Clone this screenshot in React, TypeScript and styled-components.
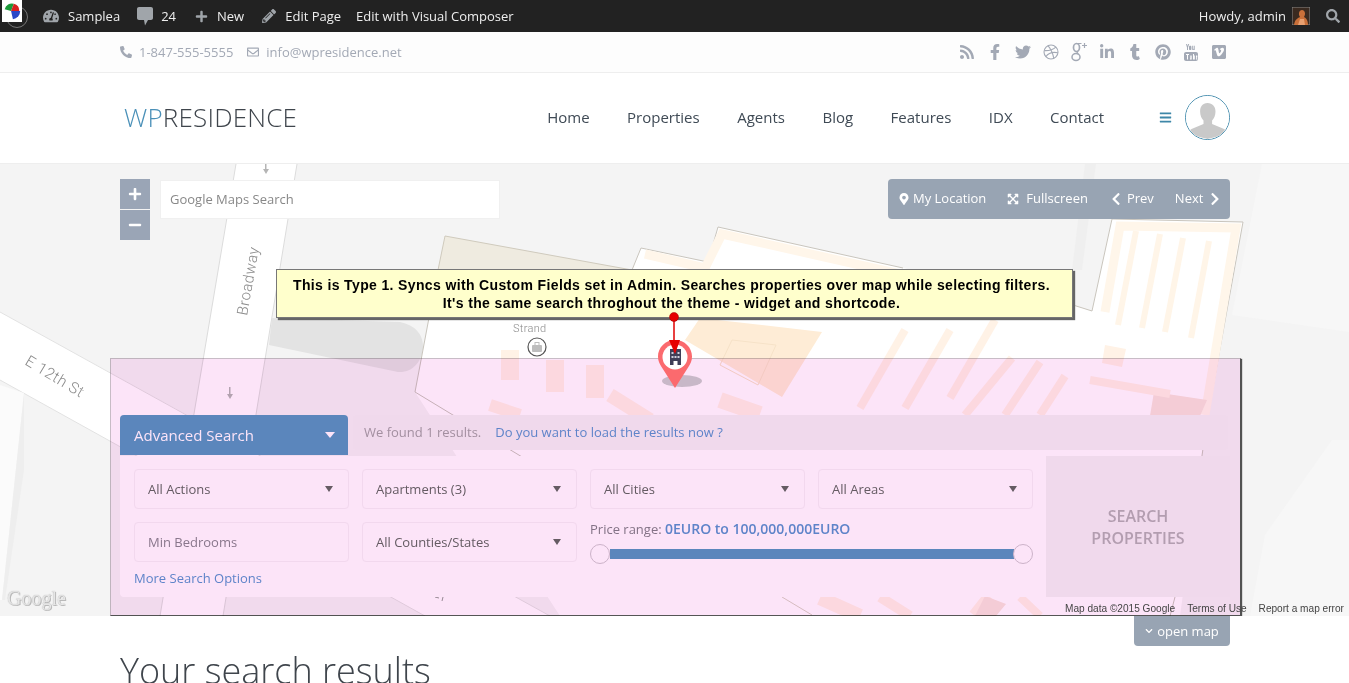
import React from "react";
import styled, { createGlobalStyle } from "styled-components";
import {
  FaBars,
  FaChevronDown,
  FaChevronLeft,
  FaChevronRight,
  FaExpandArrowsAlt,
  FaFacebookF,
  FaLinkedinIn,
  FaMapMarkerAlt,
  FaMinus,
  FaPencilAlt,
  FaPhoneAlt,
  FaPinterest,
  FaPlus,
  FaRegEnvelope,
  FaRss,
  FaSearch,
  FaTachometerAlt,
  FaTumblr,
  FaTwitter,
  FaVimeoSquare,
} from "react-icons/fa";

const GlobalStyle = createGlobalStyle`
  html, body {
    margin: 0;
    height: 100%;
    overflow: hidden;
    background: #fff;
    font-family: "Open Sans", "Liberation Sans", sans-serif;
  }
  * { box-sizing: border-box; }
`;

const AdminBar = styled.div`
  position: relative;
  z-index: 0;
  height: 32px;
  background: #222;
  color: #eee;
  font-size: 13px;
  display: flex;
  align-items: center;
  padding: 0 9px 0 0;
`;

const AdminItem = styled.span<{ $ml: number }>`
  margin-left: ${({ $ml }) => $ml}px;
  display: flex;
  align-items: center;
  white-space: nowrap;
`;

const AdminIcon = styled.span<{ $ml: number }>`
  margin-left: ${({ $ml }) => $ml}px;
  display: flex;
  align-items: center;
  color: #a0a5aa;
  font-size: 14px;
`;

const LogoBadge = styled.div`
  position: relative;
  width: 20px;
  height: 22px;
  margin: -10px 0 0 2px;
  background: #fff;
  display: flex;

  &::before {
    content: "";
    position: absolute;
    left: 4px;
    top: 6px;
    width: 20px;
    height: 20px;
    border-radius: 50%;
    border: 1px solid #777;
    z-index: -1;
  }
`;

const AdminSpacer = styled.div`
  flex: 1;
`;

const TopBar = styled.div`
  height: 41px;
  background: #fdfdfd;
  border-bottom: 1px solid #eee;
  display: flex;
  align-items: center;
  padding: 0 116px 0 120px;
  color: #a3a9b5;
  font-size: 13px;
`;

const Contact = styled.span<{ $ml: number }>`
  margin-left: ${({ $ml }) => $ml}px;
  display: flex;
  align-items: center;
  gap: 7px;
  svg {
    font-size: 12px;
  }
`;

const Socials = styled.div`
  margin-left: auto;
  display: flex;
  color: #a3a9b5;
`;

const Social = styled.span`
  width: 28px;
  height: 20px;
  display: flex;
  align-items: center;
  justify-content: center;
  font-size: 16px;
`;

const Header = styled.header`
  height: 91px;
  background: #fff;
  border-bottom: 1px solid #eee;
  display: flex;
  align-items: center;
  padding: 0 119px 2px 124px;
`;

const Logo = styled.div`
  font-size: 26px;
  font-weight: 300;
  color: #3f454c;
  letter-spacing: 0.2px;
  span {
    color: #4a90b8;
  }
`;

const Nav = styled.nav`
  margin-left: auto;
  display: flex;
  align-items: center;
  gap: 37.5px;
  font-size: 15px;
  color: #3f4a55;
`;

const MenuToggle = styled.span`
  margin-left: 55px;
  display: flex;
  color: #3e87a8;
  font-size: 13px;
`;

const UserCircle = styled.div`
  margin-left: 13px;
  width: 45px;
  height: 45px;
  border-radius: 50%;
  border: 1px solid #4a90b0;
  overflow: hidden;
  display: flex;
`;

const MapArea = styled.section`
  position: relative;
  height: 452px;
  background: #f4f4f4;
  overflow: hidden;
`;

const MapCanvas = styled.svg`
  position: absolute;
  inset: 0;
  width: 1349px;
  height: 452px;
`;

const ZoomControls = styled.div`
  position: absolute;
  left: 120px;
  top: 15px;
  display: flex;
  flex-direction: column;
  gap: 1px;
`;

const ZoomButton = styled.div`
  width: 30px;
  height: 30px;
  background: #9aa5b6;
  color: #fff;
  font-size: 14px;
  display: flex;
  align-items: center;
  justify-content: center;
`;

const MapSearch = styled.div`
  position: absolute;
  left: 160px;
  top: 16px;
  width: 340px;
  height: 39px;
  background: #fff;
  border: 1px solid #f0f0f0;
  color: #888;
  font-size: 13px;
  display: flex;
  align-items: center;
  padding: 0 0 2px 9px;
`;

const MapActions = styled.div`
  position: absolute;
  left: 888px;
  top: 15px;
  width: 342px;
  height: 40px;
  background: #98a4b3;
  border-radius: 4px;
  color: #fff;
  font-size: 13px;
  display: flex;
  align-items: center;
  padding: 0 0 2px 10px;
  gap: 21px;
`;

const MapAction = styled.span<{ $gap: number; $icon: number }>`
  display: flex;
  align-items: center;
  gap: ${({ $gap }) => $gap}px;
  white-space: nowrap;
  svg {
    font-size: ${({ $icon }) => $icon}px;
    margin-top: 2px;
  }
`;

const Callout = styled.div`
  position: absolute;
  left: 276px;
  top: 105px;
  width: 797px;
  height: 49px;
  background: #ffffcc;
  border: 1px solid #777;
  box-shadow: 2px 2px 1px #666;
  color: #000;
  font-family: "Liberation Sans", Arial, sans-serif;
  font-size: 14px;
  font-weight: 700;
  line-height: 18px;
  letter-spacing: 0.36px;
  text-align: center;
  padding: 6px 6px 0 0;
`;

const SearchBlock = styled.div`
  position: absolute;
  left: 120px;
  top: 251px;
  width: 1110px;
`;

const SearchHead = styled.div`
  display: flex;
  gap: 5px;
  height: 41px;
  align-items: flex-start;
`;

const SearchTab = styled.div`
  width: 228px;
  height: 40px;
  background: #5c96c2;
  border-radius: 4px 4px 0 0;
  color: #fff;
  font-size: 15px;
  display: flex;
  align-items: center;
  justify-content: space-between;
  padding: 0 13px 0 14px;
`;

const TabCaret = styled.span`
  width: 0;
  height: 0;
  border-left: 5px solid transparent;
  border-right: 5px solid transparent;
  border-top: 6px solid #fff;
`;

const ResultsBar = styled.div`
  width: 875px;
  height: 35px;
  background: #f3f3f3;
  border-radius: 4px;
  color: #a5a0a5;
  font-size: 13px;
  display: flex;
  align-items: center;
  padding: 0 0 2px 11px;
  gap: 14px;
`;

const ResultsLink = styled.span`
  color: #5f93cf;
`;

const SearchBody = styled.div`
  display: flex;
  height: 141px;
`;

const SearchForm = styled.div`
  width: 926px;
  background: #fff;
  border-radius: 0 0 0 4px;
  padding: 13px 14px;
  display: grid;
  grid-template-columns: repeat(4, 215px);
  grid-template-rows: 40px 40px auto;
  gap: 13px;
`;

const Field = styled.div`
  border: 1px solid #f5f2f5;
  border-radius: 4px;
  background: #fff;
  color: #666;
  font-size: 13px;
  display: flex;
  align-items: center;
  justify-content: space-between;
  padding: 0 15px 0 13px;
`;

const Placeholder = styled(Field)`
  color: #8b8590;
`;

const FieldCaret = styled.span`
  width: 0;
  height: 0;
  border-left: 4px solid transparent;
  border-right: 4px solid transparent;
  border-top: 6px solid #666;
`;

const PriceCell = styled.div`
  grid-column: 3 / span 2;
  display: flex;
  flex-direction: column;
`;

const PriceLabel = styled.div`
  color: #85808a;
  font-size: 13px;
  line-height: 14px;
  b {
    color: #5f93cf;
    font-size: 14px;
    font-weight: 600;
  }
`;

const Slider = styled.div`
  position: relative;
  height: 20px;
  margin-top: 8px;
  padding: 5px 19px 0 20px;
`;

const SliderTrack = styled.div`
  height: 10px;
  background: #5c96c2;
`;

const SliderHandle = styled.span<{ $side: "left" | "right" }>`
  position: absolute;
  top: 0;
  ${({ $side }) => $side}: 0;
  width: 20px;
  height: 20px;
  border-radius: 50%;
  background: #fff;
  border: 1px solid #cfc8cf;
`;

const MoreOptions = styled.div`
  grid-column: 1 / span 2;
  color: #5f93cf;
  font-size: 13px;
  margin-top: -6px;
`;

const SearchSubmit = styled.div`
  width: 184px;
  background: #f3f3f3;
  color: #b5b0b5;
  font-size: 16px;
  font-weight: 600;
  line-height: 22px;
  text-align: center;
  display: flex;
  align-items: center;
  justify-content: center;
  padding: 0 30px;
`;

const Highlight = styled.div`
  position: absolute;
  left: 110px;
  top: 194px;
  width: 1131px;
  height: 258px;
  background: #fce4f8;
  mix-blend-mode: multiply;
  border: 1px solid #c8bcc6;
  border-right-color: #555;
  border-bottom-color: #555;
  box-shadow: 1px 1px 1px #555;
`;

const MarkerLayer = styled.svg`
  position: absolute;
  left: 650px;
  top: 146px;
  width: 60px;
  height: 90px;
`;

const GoogleMark = styled.div`
  position: absolute;
  left: 7px;
  top: 423px;
  color: #e6e6e6;
  font-family: "Liberation Serif", serif;
  font-size: 20px;
  line-height: 22px;
  text-shadow: 0 0 1px #aaa, 1px 1px 0 #bbb;
`;

const Attribution = styled.div`
  position: absolute;
  left: 1065px;
  bottom: 1px;
  display: flex;
  gap: 12px;
  color: #444;
  font-family: "Liberation Sans", Arial, sans-serif;
  font-size: 10.1px;
  line-height: 12px;
  white-space: nowrap;
`;

const Content = styled.main`
  padding: 0 119px 0 120px;
  display: flex;
  flex-direction: column;
`;

const OpenMap = styled.div`
  align-self: flex-end;
  width: 96px;
  height: 30px;
  background: #98a4b3;
  border-radius: 0 0 4px 4px;
  color: #fff;
  font-size: 13px;
  display: flex;
  align-items: center;
  justify-content: center;
  gap: 4px;
  svg {
    font-size: 8px;
  }
`;

const PageTitle = styled.h1`
  margin: -1px 0 0;
  font-size: 36px;
  line-height: 52px;
  font-weight: 300;
  color: #3f454c;
`;

const cities = ["All Actions", "Apartments (3)", "All Cities", "All Areas"];
const navItems = ["Home", "Properties", "Agents", "Blog", "Features", "IDX", "Contact"];

const YoutubeIcon = () => (
  <svg width="14" height="17" viewBox="0 0 14 17" fill="currentColor">
    <path d="M2 0h1l.6 2L4.2 0h1L4 3.4V6H3V3.4zM6.2 1.8c.8 0 1.2.4 1.2 1.1v2c0 .7-.4 1.1-1.2 1.1S5 5.6 5 4.9v-2c0-.7.4-1.1 1.2-1.1zM8.2 1.8h.9v3.4c.3-.3.5-.4.7-.4V1.8h.9V6h-.9v-.4c-.4.4-.8.5-1.1.5-.4 0-.5-.3-.5-.7z" />
    <path
      fillRule="evenodd"
      d="M2 8h10c1.1 0 2 .9 2 2v5c0 1.1-.9 2-2 2H2c-1.1 0-2-.9-2-2v-5c0-1.1.9-2 2-2zM2 10v1h1v4.5h1V11h1v-1zM6 11.500v4h1.700v-4H7v3h-.3v-3zM9 10v5.500h1.800v-4H10V10zM12 11.500v4h1.300v-1h-.6v-1h.6v-2z"
    />
  </svg>
);

const DribbbleIcon = () => (
  <svg width="16" height="16" viewBox="0 0 16 16" fill="none" stroke="currentColor" strokeWidth="1.100">
    <circle cx="8" cy="8" r="7" />
    <path d="M5 1.700c2.500 3 4.800 7.500 5.800 12.700" />
    <path d="M1.200 6.600c4.500.2 8.700-.6 11.600-3.500" />
    <path d="M2.800 12.700c2.500-3.500 6-5.200 12-4" />
  </svg>
);

const GooglePlusIcon = () => (
  <svg width="17" height="20" viewBox="0 0 17 20" fill="none" stroke="currentColor">
    <ellipse cx="5.500" cy="5.500" rx="3" ry="4" strokeWidth="1.700" />
    <ellipse cx="5" cy="15" rx="4" ry="3.500" strokeWidth="1.500" />
    <path d="M7 9.500c-1.500 1-1 1.800.5 2.800" strokeWidth="1.300" />
    <path d="M5.500 1.500h5M13.500 1v5M11 3.500h5" strokeWidth="1.200" />
  </svg>
);

const CommentIcon = () => (
  <svg width="16" height="19" viewBox="0 0 16 19" fill="currentColor">
    <path d="M2 0h12c1.100 0 2 .9 2 2v9c0 1.100-.9 2-2 2h-3l-3 5.500L7 13H2c-1.100 0-2-.9-2-2V2C0 .9.900 0 2 0z" />
  </svg>
);

const PieLogo = () => (
  <svg width="20" height="22" viewBox="0 0 22 22">
    <path d="M10 11 L3 9 A8 8 0 0 1 13 3 Z" fill="#1c9a3a" />
    <path d="M10 11 L13 3 A8 8 0 0 1 19 11 Z" fill="#d8201f" />
    <path d="M10 11 L20 11 A9 9 0 0 1 12 20 Z" fill="#2a48c8" />
  </svg>
);

const UserThumb = () => (
  <svg width="18" height="18" viewBox="0 0 18 18">
    <rect width="18" height="18" fill="#3a2a20" stroke="#888" />
    <path d="M2 18 C3 12 6 11 8 10 C6 7 7 3 10 3 C13 3 14 7 12 10 C14 11 16 13 16 18 Z" fill="#c9703a" />
    <path d="M6 18 L8 12 L12 12 L13 18 Z" fill="#e8a070" />
  </svg>
);

const UserSilhouette = () => (
  <svg width="43" height="43" viewBox="0 0 43 43">
    <rect width="43" height="43" fill="#fff" />
    <path
      d="M21.500 7c5 0 8 3.600 8 8.500 0 3.800-1.400 7-3.400 9v3.500l12 5c2 1 3 3 3.500 5L21.500 43 2 38c.5-2 1.500-4 3.500-5l12-5v-3.500c-2-2-3.400-5.200-3.400-9C14.100 10.600 16.500 7 21.500 7z"
      fill="#c9c9c9"
    />
  </svg>
);

const MapDrawing = () => (
  <MapCanvas viewBox="0 164 1349 452">
    <polygon points="1262,164 1349,164 1349,332 1232,315" fill="#f7f7f7" />
    <polygon points="1085,164 1096,164 1082,270 1072,270" fill="#efefef" />
    <polygon points="1332,440 1349,440 1349,616 1250,616 1265,535" fill="#f7f7f7" />

    <polygon points="236,164 297,164 223,616 160,616" fill="#fff" />
    <line x1="236" y1="164" x2="160" y2="616" stroke="#dcdcdc" />
    <line x1="297" y1="164" x2="223" y2="616" stroke="#dcdcdc" />

    <polygon points="0,312 187,415 550,616 425,616 0,380" fill="#fff" />
    <line x1="0" y1="312" x2="550" y2="616" stroke="#e2e2e2" />
    <line x1="0" y1="380" x2="425" y2="616" stroke="#e2e2e2" />
    <polygon points="0,385 24,393 2,600 0,600" fill="#fbfbfb" />
    <polygon points="24,393 24,470 5,600 2,600" fill="#eeeeee" />

    <path
      d="M272 318 L400 322 C415 325 424 335 423 348 C422 362 412 373 398 372 L269 345 Z"
      fill="#e3e3e3"
    />

    <polygon points="445,236 632,270 438,270" fill="#efebe0" stroke="#cfcabd" />
    <polygon
      points="438,270 632,270 641,248 708,262 718,227 903,268 1073,305 1092,311 1112,219 1243,222 1207,420 1180,616 560,616 415,392"
      fill="#fff"
    />
    <polyline points="438,270 415,392 560,480" fill="none" stroke="#c9c5bd" />
    <polyline points="632,270 641,248 708,262 718,227 903,268" fill="none" stroke="#c9c5bd" />
    <polyline
      points="1073,305 1092,311 1112,219 1243,222 1207,420 1200,470"
      fill="none"
      stroke="#c9c5bd"
    />
    <polyline points="645,254 705,268 722,234 900,274" fill="none" stroke="#fff6ea" strokeWidth="9" />
    <polyline points="1105,312 1120,226 1236,228 1205,415" fill="none" stroke="#fff6ea" strokeWidth="9" />
    <g stroke="#fff5e8" strokeWidth="6">
      <line x1="1136" y1="231" x2="1118" y2="325" />
      <line x1="1160" y1="234" x2="1142" y2="328" />
      <line x1="1183" y1="238" x2="1165" y2="332" />
      <line x1="1209" y1="241" x2="1191" y2="338" />
    </g>
    <polygon points="700,318 822,332 782,397 685,340" fill="#feecd6" />
    <polygon points="732,340 776,345 758,385 720,365" fill="none" stroke="#f6e2c8" />
    <polygon points="1105,345 1126,349 1122,367 1102,363" fill="#fff2e6" />
    <polygon points="1154,392 1207,400 1200,416 1150,416" fill="#f7e4dc" />
    <g stroke="#fff2e6" strokeWidth="8">
      <line x1="1012" y1="358" x2="965" y2="415" />
      <line x1="1040" y1="362" x2="1005" y2="415" />
      <line x1="1065" y1="376" x2="1040" y2="415" />
      <line x1="905" y1="330" x2="860" y2="408" />
      <line x1="950" y1="330" x2="905" y2="408" />
      <line x1="995" y1="320" x2="950" y2="398" />
      <line x1="1090" y1="380" x2="1170" y2="394" />
      <line x1="510" y1="350" x2="510" y2="380" strokeWidth="18" />
      <line x1="555" y1="360" x2="555" y2="392" strokeWidth="18" />
      <line x1="595" y1="365" x2="595" y2="398" strokeWidth="18" />
      <line x1="610" y1="395" x2="650" y2="420" strokeWidth="14" />
      <line x1="720" y1="400" x2="760" y2="414" strokeWidth="16" />
      <line x1="490" y1="405" x2="520" y2="415" strokeWidth="12" />
      <line x1="820" y1="598" x2="860" y2="616" strokeWidth="14" />
      <line x1="880" y1="597" x2="910" y2="616" strokeWidth="10" />
      <line x1="990" y1="597" x2="975" y2="616" strokeWidth="14" />
      <line x1="1020" y1="597" x2="1040" y2="616" strokeWidth="8" />
    </g>
    <polygon points="985,596 1006,604 996,616 975,616" fill="#f7e4dc" />
    <line x1="782" y1="597" x2="812" y2="615" stroke="#d9d2c6" />
    <line x1="1175" y1="597" x2="1170" y2="616" stroke="#c9c5bd" />
    <path d="M435 597l4 1M443 597l-1 4" stroke="#999" fill="none" />

    <g fill="#b5b5b5" transform="translate(262 164)">
      <rect x="3" y="0" width="1.500" height="6" />
      <path d="M1 5h6l-3 5z" />
    </g>
    <g fill="#b5b5b5" transform="translate(226 387)">
      <rect x="3" y="0" width="1.500" height="8" />
      <path d="M1 7h6l-3 5z" />
    </g>

    <g fontFamily="Roboto, 'Liberation Sans', sans-serif" fontWeight="300" fill="#8a8a8a">
      <text x="0" y="0" fontSize="15" transform="translate(247 316) rotate(-80)" letterSpacing="0.5">
        Broadway
      </text>
      <text x="0" y="0" fontSize="15.500" transform="translate(24 364) rotate(31)" letterSpacing="0.5">
        E 12th St
      </text>
      <text x="513" y="332" fontSize="11" letterSpacing="0.3">
        Strand
      </text>
    </g>
    <circle cx="537" cy="347" r="9" fill="#fff" stroke="#555" strokeWidth="1.200" />
    <rect x="532" y="345" width="10" height="7" rx="1" fill="#bdbdbd" />
    <rect x="535" y="342.500" width="4" height="3" fill="none" stroke="#bdbdbd" />
  </MapCanvas>
);

const MarkerDrawing = () => (
  <MarkerLayer viewBox="650 310 60 90">
    <ellipse cx="682" cy="381" rx="20" ry="6" fill="#c8b8c8" />
    <path
      d="M675 340c-9.600 0-17 7.500-17 16.600 0 4 1.400 7.400 3.600 10.400L675 388l13.400-21c2.200-3 3.600-6.400 3.600-10.400 0-9.100-7.400-16.600-17-16.600z"
      fill="#fb6a6e"
    />
    <circle cx="675" cy="357" r="12.500" fill="#fff" />
    <path d="M670 349h11v16h-3.500v-4h-4v4H670z" fill="#3f3f58" />
    <g fill="#cfcfdc">
      <rect x="671.500" y="352" width="2" height="2" />
      <rect x="677.500" y="352" width="2" height="2" />
      <rect x="671.500" y="356" width="2" height="2" />
      <rect x="674.500" y="356" width="2" height="2" />
      <rect x="677.500" y="356" width="2" height="2" />
    </g>
    <line x1="674" y1="317" x2="674" y2="345" stroke="#e00000" strokeWidth="1.500" />
    <circle cx="674" cy="317" r="4.500" fill="#e60000" stroke="#900" strokeWidth="0.500" />
    <polygon points="669,340 680,340 675,354" fill="#e60000" />
  </MarkerLayer>
);

const App = () => {
  return (
    <>
      <GlobalStyle />
      <AdminBar>
        <LogoBadge>
          <PieLogo />
        </LogoBadge>
        <AdminIcon $ml={21}>
          <FaTachometerAlt size={16} />
        </AdminIcon>
        <AdminItem $ml={9}>Samplea</AdminItem>
        <AdminIcon $ml={17}>
          <CommentIcon />
        </AdminIcon>
        <AdminItem $ml={8}>24</AdminItem>
        <AdminIcon $ml={19}>
          <FaPlus size={13} />
        </AdminIcon>
        <AdminItem $ml={9}>New</AdminItem>
        <AdminIcon $ml={18}>
          <FaPencilAlt size={14} />
        </AdminIcon>
        <AdminItem $ml={9}>Edit Page</AdminItem>
        <AdminItem $ml={15}>Edit with Visual Composer</AdminItem>
        <AdminSpacer />
        <AdminItem $ml={0}>Howdy, admin</AdminItem>
        <AdminItem $ml={6}>
          <UserThumb />
        </AdminItem>
        <AdminIcon $ml={16}>
          <FaSearch size={14} />
        </AdminIcon>
      </AdminBar>

      <TopBar>
        <Contact $ml={0}>
          <FaPhoneAlt />
          1-847-555-5555
        </Contact>
        <Contact $ml={14}>
          <FaRegEnvelope />
          info@wpresidence.net
        </Contact>
        <Socials>
          <Social>
            <FaRss />
          </Social>
          <Social>
            <FaFacebookF />
          </Social>
          <Social>
            <FaTwitter />
          </Social>
          <Social>
            <DribbbleIcon />
          </Social>
          <Social>
            <GooglePlusIcon />
          </Social>
          <Social>
            <FaLinkedinIn />
          </Social>
          <Social>
            <FaTumblr />
          </Social>
          <Social>
            <FaPinterest />
          </Social>
          <Social>
            <YoutubeIcon />
          </Social>
          <Social>
            <FaVimeoSquare />
          </Social>
        </Socials>
      </TopBar>

      <Header>
        <Logo>
          <span>WP</span>RESIDENCE
        </Logo>
        <Nav>
          {navItems.map((item) => (
            <span key={item}>{item}</span>
          ))}
        </Nav>
        <MenuToggle>
          <FaBars />
        </MenuToggle>
        <UserCircle>
          <UserSilhouette />
        </UserCircle>
      </Header>

      <MapArea>
        <MapDrawing />
        <ZoomControls>
          <ZoomButton>
            <FaPlus />
          </ZoomButton>
          <ZoomButton>
            <FaMinus />
          </ZoomButton>
        </ZoomControls>
        <MapSearch>Google Maps Search</MapSearch>
        <MapActions>
          <MapAction $gap={3} $icon={12}>
            <FaMapMarkerAlt />
            My Location
          </MapAction>
          <MapAction $gap={7} $icon={12}>
            <FaExpandArrowsAlt />
            Fullscreen
          </MapAction>
          <MapAction $gap={4} $icon={14}>
            <FaChevronLeft />
            Prev
          </MapAction>
          <MapAction $gap={5} $icon={14}>
            Next
            <FaChevronRight />
          </MapAction>
        </MapActions>
        <GoogleMark>Google</GoogleMark>

        <SearchBlock>
          <SearchHead>
            <SearchTab>
              Advanced Search
              <TabCaret />
            </SearchTab>
            <ResultsBar>
              We found 1 results.
              <ResultsLink>Do you want to load the results now ?</ResultsLink>
            </ResultsBar>
          </SearchHead>
          <SearchBody>
            <SearchForm>
              {cities.map((city) => (
                <Field key={city}>
                  {city}
                  <FieldCaret />
                </Field>
              ))}
              <Placeholder>Min Bedrooms</Placeholder>
              <Field>
                All Counties/States
                <FieldCaret />
              </Field>
              <PriceCell>
                <PriceLabel>
                  Price range: <b>0EURO to 100,000,000EURO</b>
                </PriceLabel>
                <Slider>
                  <SliderTrack />
                  <SliderHandle $side="left" />
                  <SliderHandle $side="right" />
                </Slider>
              </PriceCell>
              <MoreOptions>More Search Options</MoreOptions>
            </SearchForm>
            <SearchSubmit>SEARCH PROPERTIES</SearchSubmit>
          </SearchBody>
        </SearchBlock>

        <Highlight />
        <Callout>
          This is Type 1. Syncs with Custom Fields set in Admin. Searches properties over map while selecting filters.
          <br />
          It's the same search throghout the theme - widget and shortcode.
        </Callout>
        <MarkerDrawing />
        <Attribution>
          <span>Map data ©2015 Google</span>
          <span>Terms of Use</span>
          <span>Report a map error</span>
        </Attribution>
      </MapArea>

      <Content>
        <OpenMap>
          <FaChevronDown />
          open map
        </OpenMap>
        <PageTitle>Your search results</PageTitle>
      </Content>
    </>
  );
};

export default App;
